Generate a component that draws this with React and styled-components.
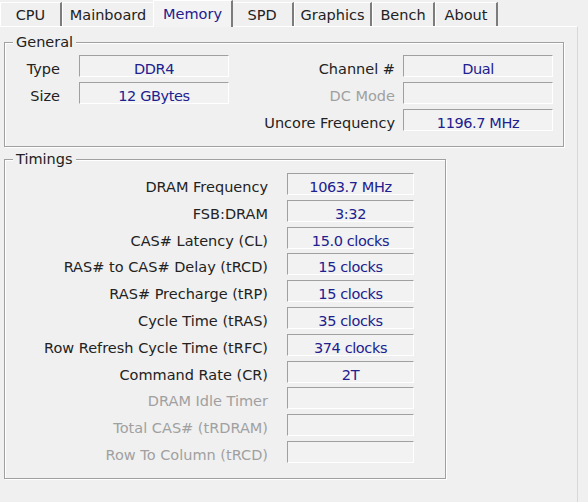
import React from "react";
import styled, { createGlobalStyle } from "styled-components";

const Global = createGlobalStyle`
  html, body {
    margin: 0;
    padding: 0;
    background: #f0f0f0;
  }
  body {
    font-family: "DejaVu Sans", "Liberation Sans", sans-serif;
    font-size: 14.5px;
    color: #222;
  }
`;

const Window = styled.div`
  width: 588px;
  height: 502px;
  overflow: hidden;
  background: #f0f0f0;
`;

const TabStrip = styled.div`
  display: flex;
  align-items: flex-start;
  height: 26px;
`;

const Tab = styled.div`
  box-sizing: border-box;
  flex: none;
  position: relative;
  z-index: ${(p) => (p.$active ? 2 : 1)};
  width: ${(p) => (p.$active ? p.$w + 4 : p.$w)}px;
  height: ${(p) => (p.$active ? 27 : 24)}px;
  margin: ${(p) => (p.$active ? "0 -2px" : "2px 0 0")};
  padding-top: ${(p) => (p.$active ? 1 : 0)}px;
  line-height: 24px;
  text-align: center;
  white-space: nowrap;
  color: ${(p) => (p.$active ? "#20208f" : "#222")};
  background: ${(p) => (p.$active ? "#f3f3f3" : "#f0f0f0")};
  border-top: 1px solid #fff;
  border-left: 1px solid #fff;
  border-right: 2px solid #7c7c7c;
`;

const Panel = styled.div`
  box-sizing: border-box;
  width: 578px;
  height: 476px;
  padding: 7px 0 0 4px;
  border-top: 1px solid #fff;
  border-right: 1px solid #d8d8d8;
`;

const Group = styled.fieldset`
  box-sizing: border-box;
  min-width: 0;
  margin: 0;
  border: 1px solid #a0a0a0;
  box-shadow: inset 1px 1px 0 #fff, 1px 1px 0 #fff;
`;

const GeneralGroup = styled(Group)`
  width: 560px;
  padding: 5px 10px 15px 0;
`;

const TimingsGroup = styled(Group)`
  width: 442px;
  margin-top: 4px;
  padding: 6px 31px 15px 0;
`;

const Legend = styled.legend`
  margin-left: 8px;
  padding: 0 3px;
  line-height: 16px;
  color: #222;
  background: #f0f0f0;
`;

const GeneralGrid = styled.div`
  display: grid;
  grid-template-columns: 224px 324px;
  row-gap: 5px;
`;

const Field = styled.div`
  display: flex;
  justify-content: flex-end;
  gap: ${(p) => p.$gap}px;
`;

const Label = styled.div`
  box-sizing: border-box;
  height: 22px;
  padding-top: 3px;
  line-height: 22px;
  white-space: nowrap;
  text-align: right;
  color: ${(p) => (p.$dim ? "#a0a0a0" : "#222")};
`;

const Value = styled.div`
  box-sizing: border-box;
  width: ${(p) => (p.$w ? `${p.$w}px` : "auto")};
  height: 22px;
  padding-top: 2px;
  line-height: 22px;
  text-align: center;
  white-space: nowrap;
  letter-spacing: -0.4px;
  color: #20208f;
  background: #f2f2f2;
  border-top: 1px solid #a0a0a0;
  border-left: 1px solid #a0a0a0;
  border-right: 1px solid #fff;
  border-bottom: 1px solid #fff;
`;

const TimingGrid = styled.div`
  display: grid;
  grid-template-columns: 1fr 127px;
  column-gap: 19px;
  row-gap: 4.8px;
`;

const tabs = [
  { name: "CPU", w: 62 },
  { name: "Mainboard", w: 93 },
  { name: "Memory", w: 76, active: true },
  { name: "SPD", w: 63 },
  { name: "Graphics", w: 78 },
  { name: "Bench", w: 63 },
  { name: "About", w: 63 },
];

const timings = [
  ["DRAM Frequency", "1063.7 MHz"],
  ["FSB:DRAM", "3:32"],
  ["CAS# Latency (CL)", "15.0 clocks"],
  ["RAS# to CAS# Delay (tRCD)", "15 clocks"],
  ["RAS# Precharge (tRP)", "15 clocks"],
  ["Cycle Time (tRAS)", "35 clocks"],
  ["Row Refresh Cycle Time (tRFC)", "374 clocks"],
  ["Command Rate (CR)", "2T"],
  ["DRAM Idle Timer", "", true],
  ["Total CAS# (tRDRAM)", "", true],
  ["Row To Column (tRCD)", "", true],
];

export default function App() {
  return (
    <>
      <Global />
      <Window>
        <TabStrip>
          {tabs.map((t) => (
            <Tab key={t.name} $w={t.w} $active={t.active}>
              {t.name}
            </Tab>
          ))}
        </TabStrip>
        <Panel>
          <GeneralGroup>
            <Legend>General</Legend>
            <GeneralGrid>
              <Field $gap={19}>
                <Label>Type</Label>
                <Value $w={150}>DDR4</Value>
              </Field>
              <Field $gap={8}>
                <Label>Channel #</Label>
                <Value $w={150}>Dual</Value>
              </Field>
              <Field $gap={19}>
                <Label>Size</Label>
                <Value $w={150}>12 GBytes</Value>
              </Field>
              <Field $gap={8}>
                <Label $dim>DC Mode</Label>
                <Value $w={150}></Value>
              </Field>
              <div />
              <Field $gap={8}>
                <Label>Uncore Frequency</Label>
                <Value $w={150}>1196.7 MHz</Value>
              </Field>
            </GeneralGrid>
          </GeneralGroup>
          <TimingsGroup>
            <Legend>Timings</Legend>
            <TimingGrid>
              {timings.map(([label, value, dim]) => (
                <React.Fragment key={label}>
                  <Label $dim={dim}>{label}</Label>
                  <Value>{value}</Value>
                </React.Fragment>
              ))}
            </TimingGrid>
          </TimingsGroup>
        </Panel>
      </Window>
    </>
  );
}
